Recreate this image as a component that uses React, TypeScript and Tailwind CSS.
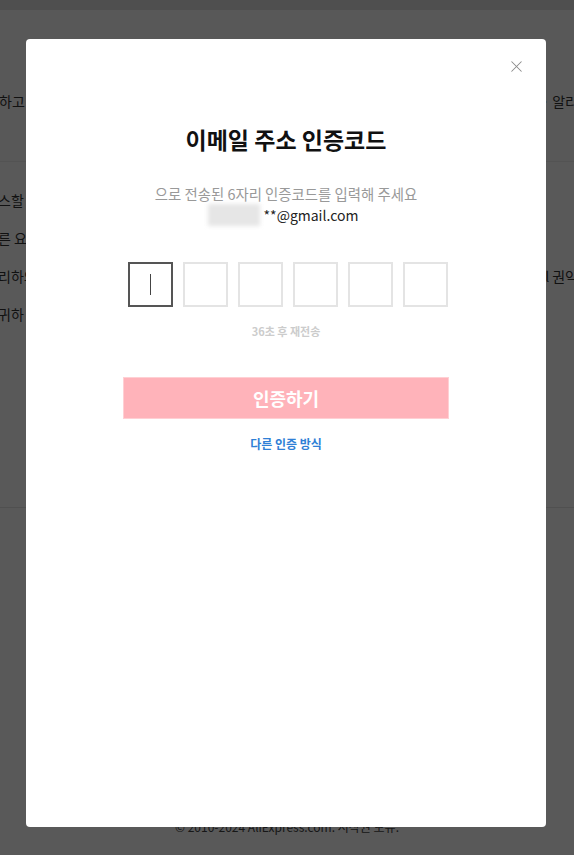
import { X } from 'lucide-react';

const font = { fontFamily: '"Noto Sans CJK KR", "Noto Sans", sans-serif' };

const boxes = [0, 1, 2, 3, 4, 5];

export default function App() {
    return (
        <div className="relative h-[855px] w-[574px] overflow-hidden bg-white text-[#333]" style={font}>
            {/* Page behind the dialog */}
            <div className="flex h-full flex-col">
                <div className="h-[10px] bg-[#e2e2e2]" />
                <div className="flex h-[152px] items-start justify-between border-b border-[#eeeeee] bg-[#fbfbfb] pt-[81px] text-[14px] leading-[20px]">
                    <span className="-ml-[1px]">하고</span>
                    <span className="-mr-[4px]">· 알리</span>
                </div>
                <div className="flex h-[345px] flex-col gap-[17px] pt-[28px] text-[14px]">
                    <div className="-ml-[2px] flex justify-between">
                        <span>스할 수</span>
                    </div>
                    <div className="-ml-[2px] flex justify-between">
                        <span>른 요</span>
                    </div>
                    <div className="-ml-[2px] flex justify-between">
                        <span>리하의</span>
                        <span className="-mr-[4px]">l 권익</span>
                    </div>
                    <div className="-ml-[2px] flex justify-between">
                        <span>귀하</span>
                    </div>
                </div>
                <div className="flex-1 border-t border-[#e6e6e6] bg-white">
                    <p className="pt-[310px] text-center text-[12px] text-[#444]">© 2010-2024 AliExpress.com. 저작권 보유.</p>
                </div>
            </div>

            {/* Dim overlay */}
            <div className="absolute inset-0 bg-black/65" />

            {/* Dialog */}
            <div className="absolute left-[26px] top-[39px] flex h-[788px] w-[520px] flex-col items-center rounded-[4px] bg-white">
                <button type="button" className="absolute right-[20px] top-[18px] text-[#8a8a8a]">
                    <X className="h-[19px] w-[19px]" strokeWidth={1.3} />
                </button>

                <h2 className="mt-[85px] text-[23px] font-bold leading-[30px] text-[#111]">이메일 주소 인증코드</h2>

                <p className="mt-[30px] text-[14.4px] leading-[20px] text-[#999]">으로 전송된 6자리 인증코드를 입력해 주세요</p>
                <p className="flex items-center text-[14px] leading-[20px] text-[#222]">
                    <span className="-ml-[6px] mr-[4px] inline-block h-[22px] w-[52px] bg-[#e6e6e6] blur-[2px]" />
                    **@gmail.com
                </p>

                <div className="ml-[4px] mt-[36px] flex gap-[10px]">
                    {boxes.map((i) => (
                        <div
                            key={i}
                            className={
                                i === 0
                                    ? 'flex h-[45px] w-[45px] items-center justify-center border-2 border-[#555]'
                                    : 'h-[45px] w-[45px] border-2 border-[#e4e4e4]'
                            }
                        >
                            {i === 0 && <span className="h-[21px] w-px bg-[#444]" />}
                        </div>
                    ))}
                </div>

                <p className="mt-[16px] text-[11px] font-semibold leading-[16px] text-[#cccccc]">36초 후 재전송</p>

                <button
                    type="button"
                    className="mt-[38px] h-[42px] w-[326px] border border-[#ffd0d4] bg-[#ffb3ba] text-[18px] font-bold text-white"
                >
                    인증하기
                </button>

                <a href="#" className="mt-[17px] text-[12px] font-semibold leading-[16px] text-[#2f7fd6]">다른 인증 방식</a>
            </div>
        </div>
    );
}
